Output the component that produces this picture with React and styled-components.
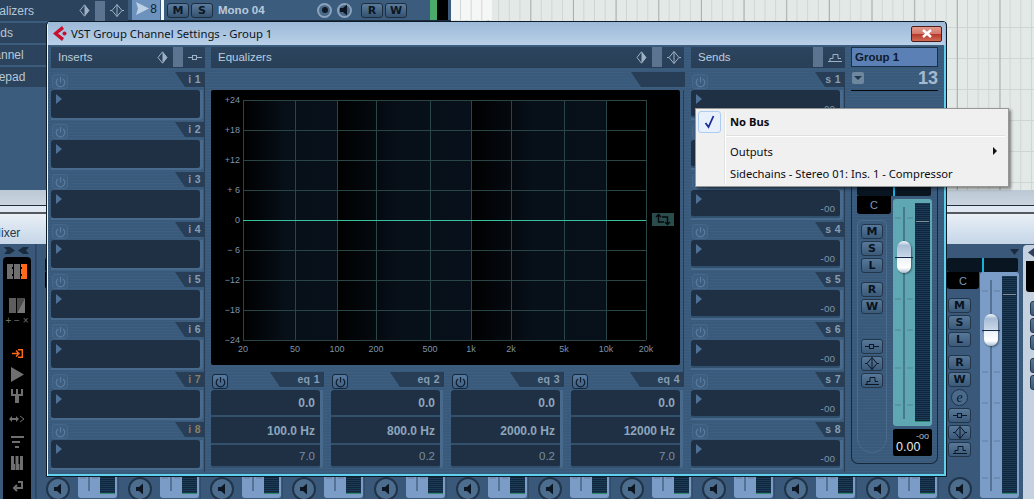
import styled, { createGlobalStyle } from 'styled-components';

const GlobalStyle = createGlobalStyle`
    html, body {
        margin: 0;
        padding: 0;
        background: #3b5a7a;
    }
    * {
        box-sizing: border-box;
    }
`;

const Page = styled.div`
    position: relative;
    display: flex;
    flex-direction: column;
    width: 1034px;
    height: 499px;
    overflow: hidden;
    font-family: "Liberation Sans", Arial, sans-serif;
`;

/* ---------- project window behind ---------- */

const Arrange = styled.div`
    display: flex;
    height: 190px;
    flex-shrink: 0;
`;

const Inspector = styled.div`
    width: 128px;
    background: #3c5c7e;
    display: flex;
    flex-direction: column;
    gap: 2px;
`;

const InspectorRow = styled.div`
    display: flex;
    align-items: center;
    height: 20px;
    padding-right: 4px;
    background: #2b435d;
    color: #b8c8d8;
    font-size: 12px;
    white-space: nowrap;
    overflow: hidden;

    &:first-child {
        height: 21px;
    }
`;

const ClippedName = styled.span`
    margin-left: ${(props) => props.$shift}px;
    margin-right: auto;
`;

const GreyBar = styled.span`
    width: 10px;
    height: 20px;
    margin: 0 ${(props) => props.$space ?? 5}px;
    background: #5c7490;
`;

const TrackList = styled.div`
    width: 323px;
    background: #3c5c7e;
`;

const TrackRow = styled.div`
    display: flex;
    align-items: center;
    height: 21px;
    border-bottom: 1px solid #1d2d3e;
`;

const TrackNumber = styled.div`
    display: flex;
    align-items: center;
    justify-content: space-between;
    width: 28px;
    height: 20px;
    margin-left: 4px;
    padding: 0 3px 3px 4px;
    background: #6d92bd;
    color: #10202f;
    font-size: 12px;
`;

const TrackGap = styled.div`
    width: 3px;
    height: 20px;
    margin: 0 1px;
    background: #f4f6f4;
`;

const TrackButton = styled.div`
    display: flex;
    align-items: center;
    justify-content: center;
    width: 22px;
    height: 15px;
    margin-left: 2px;
    border-radius: 3px;
    border: 1px solid #1c2d3f;
    background: linear-gradient(#5c7c9e, #35526f);
    color: #0b1723;
    font-family: "DejaVu Sans", sans-serif;
    font-size: 11px;
    font-weight: bold;
`;

const TrackName = styled.span`
    margin-left: 5px;
    margin-right: auto;
    color: #b9cadb;
    font-size: 11.5px;
    font-weight: bold;
`;

const RoundKnob = styled.span`
    display: flex;
    align-items: center;
    justify-content: center;
    width: 15px;
    height: 15px;
    margin-right: ${(props) => props.$space}px;
    border-radius: 50%;
    border: 2px solid #8aa2bb;
    background: #4a6888;
`;

const KnobDot = styled.span`
    width: 6px;
    height: 6px;
    border-radius: 50%;
    background: #0f1b28;
`;

const Level = styled.span`
    width: ${(props) => props.$width}px;
    height: 20px;
    background: ${(props) => props.$color};
`;

const GridArea = styled.div`
    flex: 1;
    background-color: #e3e9e7;
    background-image:
        linear-gradient(90deg, #a9b0ae 1px, transparent 1px),
        linear-gradient(90deg, #cfd5d3 1px, transparent 1px),
        linear-gradient(#cfd5d3 1px, transparent 1px);
    background-size: 42.67px 100%, 10.67px 100%, 100% 31px;
    background-position: 36.7px 0, 4.5px 0, 0 27px;
`;

const LightGrid = styled.div`
    width: 41px;
    height: 20px;
    background-color: #f5f7f6;
    background-image: linear-gradient(90deg, #cfd5d3 1px, transparent 1px);
    background-size: 10.67px 100%;
    background-position: 9px 0;
`;

const ArrangeFooter = styled.div`
    height: 16px;
    flex-shrink: 0;
    background: linear-gradient(#bcc8d5, #c9d4df);
    border-bottom: 1px solid #1e2e3e;
`;

const ArrangeScroll = styled.div`
    height: 8px;
    flex-shrink: 0;
    background: #dfe8f2;
    border-bottom: 2px solid #55585c;
`;

const MixerTitle = styled.div`
    display: flex;
    align-items: flex-end;
    height: 30px;
    flex-shrink: 0;
    padding-bottom: 4px;
    background: linear-gradient(#e9eff6, #c5d6e8);
    color: #24384c;
    font-size: 12px;
    overflow: hidden;
`;

/* ---------- mixer ---------- */

const Mixer = styled.div`
    display: flex;
    flex: 1;
    min-height: 0;
    background: #3a5879;
`;

const ToolColumn = styled.div`
    display: flex;
    flex-direction: column;
    width: 36px;
    flex-shrink: 0;
    padding: 3px 5px 0 3px;
    border-right: 1px solid #2c4661;
`;

const CollapseRow = styled.div`
    display: flex;
    justify-content: space-between;
    height: 10px;
    padding: 0 1px;
`;

const ToolBar = styled.div`
    display: flex;
    flex: 1;
    flex-direction: column;
    align-items: center;
    width: 28px;
    border-radius: 4px 4px 0 0;
    background: #000;
`;

const ToolIcon = styled.svg`
    display: block;
    flex-shrink: 0;
    margin-top: ${(props) => props.$top}px;
`;

const ToolSigns = styled.span`
    margin-top: 2px;
    color: #6f6f6f;
    font-size: 10px;
    line-height: 11px;
    white-space: nowrap;
`;

const Channel = styled.div`
    display: flex;
    flex-direction: column;
    width: 82px;
    flex-shrink: 0;
    padding: 3px 1px 0 8px;
    border-left: 1px solid #314d6a;
`;

const ChannelArrow = styled.div`
    display: flex;
    justify-content: flex-end;
    height: 11px;
    padding: 2px 0 0 0;
`;

const LevelBar = styled.div`
    display: flex;
    justify-content: center;
    width: ${(props) => props.$width}px;
    height: 14px;
    flex-shrink: 0;
    border-radius: 2px;
    background: #0a1522;
`;

const LevelTick = styled.span`
    width: 2px;
    height: 100%;
    background: #17b2dc;
`;

const ChannelBody = styled.div`
    display: flex;
    flex: 1;
    min-height: 0;
`;

const ButtonColumn = styled.div`
    display: flex;
    flex-direction: column;
    width: 33px;
    flex-shrink: 0;
`;

const PanBox = styled.div`
    display: flex;
    align-items: center;
    justify-content: center;
    width: ${(props) => props.$width}px;
    height: ${(props) => props.$height}px;
    flex-shrink: 0;
    border-radius: 0 0 3px 3px;
    background: #000;
    color: #7d9ab8;
    font-size: 11px;
`;

const StripButton = styled.div`
    display: flex;
    align-items: center;
    justify-content: center;
    width: 23px;
    height: 15px;
    flex-shrink: 0;
    margin-top: ${(props) => props.$top ?? 2}px;
    margin-left: 1px;
    border-radius: 3px;
    border: 1px solid #223549;
    background: linear-gradient(#587899, #3b5a7a);
    color: #08131e;
    font-family: "DejaVu Sans", sans-serif;
    font-size: 11px;
    font-weight: bold;
`;

const EditButton = styled.div`
    display: flex;
    align-items: center;
    justify-content: center;
    width: 17px;
    height: 17px;
    flex-shrink: 0;
    margin: 2px 0 0 4px;
    border-radius: 50%;
    border: 1px solid #1f3146;
    background: #4a6a8b;
    color: #0b1723;
    font-family: "Liberation Serif", serif;
    font-size: 14px;
    font-style: italic;
`;

const SpeakerButton = styled.div`
    display: flex;
    align-items: center;
    justify-content: center;
    width: 24px;
    height: 24px;
    flex-shrink: 0;
    margin-top: auto;
    margin-bottom: -2px;
    margin-left: 1px;
    border-radius: 50%;
    border: 2px solid #20344a;
    background: #4d6d8e;
`;

const FaderPanel = styled.div`
    position: relative;
    display: flex;
    justify-content: flex-end;
    width: 39px;
    height: ${(props) => props.$height}px;
    flex-shrink: 0;
    padding: 4px 2px 4px 0;
    border-radius: 3px;
    background: ${(props) => props.$color};
`;

const FaderScale = styled.svg`
    position: absolute;
    left: 0;
    top: 0;
`;

const FaderHandle = styled.div`
    position: absolute;
    left: 4px;
    top: 42px;
    width: 14px;
    height: 32px;
    border-radius: 7px;
    background: linear-gradient(#f4f7fb 0, #a8bdd6 14%, #c5d4e5 46%, #eef3f8 56%, #fff 84%, #a9bcd2 100%);
    box-shadow: 1px 1px 2px rgba(0, 0, 0, 0.45);

    &::after {
        content: '';
        position: absolute;
        left: -2px;
        right: -2px;
        top: 16px;
        height: 1px;
        background: #112a4a;
    }
`;

const Meter = styled.div`
    position: relative;
    width: 15px;
    height: 100%;
    background: repeating-linear-gradient(#1a3a55 0, #1a3a55 1px, #10263c 1px, #10263c 2px);
    border-bottom: 1px solid #2f8a6a;

    &::after {
        content: '';
        position: absolute;
        left: 1px;
        right: 1px;
        top: 18px;
        height: 1px;
        background: #7f8f9c;
    }
`;

const SideChannel = styled.div`
    display: flex;
    flex-direction: column;
    flex: 1;
    margin: 1px 0 0 3px;
    padding: 3px 0 0 3px;
    border-radius: 4px 0 0 0;
    background: #c3d1e0;
`;

const SideArrow = styled.svg`
    display: block;
    flex-shrink: 0;
    margin: 0 0 4px 2px;
`;

const SideButton = styled(StripButton)`
    margin-left: 4px;
`;

/* ---------- channel settings window ---------- */

const SettingsWindow = styled.div`
    position: absolute;
    left: 46px;
    top: 21px;
    display: flex;
    flex-direction: column;
    width: 901px;
    height: 456px;
    border: 1px solid #0d1a27;
    border-radius: 4px 4px 0 0;
    background: #3c5c7d;
    box-shadow: inset 1px 0 0 #eef6fb, inset -2px -2px 0 #5fd0ee;
`;

const TitleBar = styled.div`
    display: flex;
    align-items: center;
    height: 23px;
    flex-shrink: 0;
    margin: 0 1px;
    padding: 0 3px 0 5px;
    background: linear-gradient(#9cb9d8, #b9d0e8);
`;

const WindowTitle = styled.span`
    margin-left: 3px;
    margin-right: auto;
    color: #0d1520;
    font-family: "Noto Sans", sans-serif;
    font-size: 11.35px;
`;

const CloseButton = styled.div`
    display: flex;
    align-items: center;
    justify-content: center;
    width: 31px;
    height: 16px;
    border: 1px solid #4c1c18;
    border-radius: 2px;
    background: linear-gradient(#e29a8c 0, #d5766a 48%, #b5392b 52%, #cf6a55 100%);
`;

const WindowBody = styled.div`
    display: flex;
    flex: 1;
    min-height: 0;
    margin: 0 2px 2px 1px;
    padding: 2px 0 0 3px;
    background: repeating-linear-gradient(#3e5e7f 0, #3e5e7f 1px, #3a5a7b 1px, #3a5a7b 3px);
`;

const RackColumn = styled.div`
    display: flex;
    flex-direction: column;
    width: 154px;
    margin-right: ${(props) => props.$space}px;
`;

const EqColumn = styled.div`
    display: flex;
    flex-direction: column;
    width: 473px;
    margin-right: 7px;
`;

const PanelHeader = styled.div`
    display: flex;
    align-items: center;
    height: 21px;
    flex-shrink: 0;
    margin-bottom: 4px;
    padding: 0 3px 1px 7px;
    background: linear-gradient(#2c445e, #283f57);
    color: #bccddd;
    font-size: 11.5px;
`;

const HeaderName = styled.span`
    margin-right: auto;
`;

const SlotList = styled.div`
    display: flex;
    flex-direction: column;
    border-right: 1px solid #263d55;
`;

const Slot = styled.div`
    display: flex;
    flex-direction: column;
    height: 50px;
`;

const SlotHead = styled.div`
    display: flex;
    justify-content: space-between;
    height: 18px;
    flex-shrink: 0;
`;

const PowerButton = styled.div`
    display: flex;
    align-items: center;
    justify-content: center;
    width: 16px;
    height: 15px;
    margin: 2px 0 0 1px;
    border-radius: 3px;
    border: 1px solid ${(props) => (props.$active ? '#15283c' : '#46668a')};
    background: ${(props) => (props.$active ? 'linear-gradient(#587a9e, #3f5f82)' : '#3e5e80')};
`;

const SlotTag = styled.div`
    display: flex;
    align-items: center;
    justify-content: flex-end;
    width: ${(props) => props.$width}px;
    height: 15px;
    padding: 0 4px 1px 0;
    margin-right: -1px;
    clip-path: polygon(0 0, 100% 0, 100% 100%, 10px 100%);
    background: #273e56;
    color: ${(props) => (props.$muted ? '#8c7f5f' : '#869db4')};
    font-size: 10.5px;
    font-weight: bold;
    letter-spacing: 0.4px;
`;

const SlotFrame = styled.div`
    width: 152px;
    height: 30px;
    border-right: 3px solid #486a8c;
    border-bottom: 2px solid #486a8c;
    border-radius: 0 0 4px 0;
`;

const SlotBox = styled.div`
    display: flex;
    justify-content: space-between;
    height: 28px;
    padding: 4px 5px 0 5px;
    border-radius: 3px;
    background: #1f3044;
    border-bottom: ${(props) => (props.$send ? '2px solid #31506e' : 'none')};
`;

const SlotArrow = styled.span`
    width: 0;
    height: 0;
    border-top: 5px solid transparent;
    border-bottom: 5px solid transparent;
    border-left: 6px solid #4d7096;
`;

const SendLevel = styled.span`
    align-self: flex-end;
    margin-bottom: 2px;
    color: #7a90a6;
    font-size: 10px;
`;

const GraphHead = styled.div`
    display: flex;
    justify-content: flex-end;
    height: 18px;
    flex-shrink: 0;
`;

const GraphArea = styled.div`
    height: 282px;
    flex-shrink: 0;
    border-right: 1px solid #263d55;
    padding-right: 3px;
`;

const Graph = styled.svg`
    display: block;
    background: #000;
    border-radius: 2px;
`;

const EqRow = styled.div`
    display: flex;
    gap: 8px;
`;

const EqModule = styled.div`
    display: flex;
    flex-direction: column;
    width: 112px;
    height: 98px;
`;

const EqFrame = styled.div`
    width: 112px;
    border-right: 3px solid #486a8c;
    border-radius: 0 0 3px 0;
`;

const EqBox = styled.div`
    display: flex;
    flex-direction: column;
    height: 78px;
    border-radius: 3px;
    background: #1f3044;
    border-bottom: 2px solid #31506e;
`;

const EqValue = styled.div`
    display: flex;
    align-items: center;
    justify-content: flex-end;
    height: ${(props) => props.$height}px;
    padding: 1px 5px 0 0;
    border-bottom: ${(props) => (props.$last ? 'none' : '2px solid #33506c')};
    color: #8ea5bb;
    font-size: ${(props) => (props.$last ? 11.5 : 12)}px;
    font-weight: ${(props) => (props.$last ? 'normal' : 'bold')};
    opacity: ${(props) => (props.$last ? 0.8 : 1)};
`;

const StripColumn = styled.div`
    display: flex;
    flex-direction: column;
    width: 87px;
`;

const GroupName = styled.div`
    display: flex;
    align-items: center;
    height: 20px;
    flex-shrink: 0;
    padding-left: 3px;
    border: 1px solid #1b2f45;
    background: #5a80b6;
    color: #0f1b29;
    font-size: 11.5px;
    font-weight: bold;
`;

const StripNumberRow = styled.div`
    display: flex;
    align-items: center;
    justify-content: space-between;
    height: 24px;
    flex-shrink: 0;
    padding: 0 0 0 1px;
    border-bottom: 1px solid #05090e;
    color: #a5bace;
    font-size: 18px;
    font-weight: bold;
`;

const DropButton = styled.div`
    display: flex;
    align-items: center;
    justify-content: center;
    width: 12px;
    height: 12px;
    margin-bottom: 2px;
    border-radius: 2px;
    background: #6d879f;
`;

const DropArrow = styled.span`
    width: 0;
    height: 0;
    border-left: 4px solid transparent;
    border-right: 4px solid transparent;
    border-top: 4px solid #22384e;
`;

const StripFrame = styled.div`
    display: flex;
    flex-direction: column;
    height: 282px;
    margin-top: 91px;
    padding-left: 5px;
    border-left: 1px solid #16283a;
    border-right: 1px solid #16283a;
    border-bottom: 1px solid #16283a;
    border-radius: 0 0 7px 7px;
`;

const StripRow = styled.div`
    display: flex;
    flex: 1;
    min-height: 0;
`;

const StripLeft = styled.div`
    display: flex;
    flex-direction: column;
    width: 36px;
    flex-shrink: 0;
`;

const ButtonWell = styled.div`
    display: flex;
    flex-direction: column;
    align-items: center;
    width: 30px;
    height: 233px;
    margin-top: 6px;
    padding-top: 3px;
    border: 1px solid #4a6b8c;
    border-radius: 5px 5px 15px 15px;

    ${StripButton} {
        margin-left: 0;
        width: 22px;
    }
`;

const StripRight = styled.div`
    display: flex;
    flex-direction: column;
    padding-top: 3px;
`;

const ValueBox = styled.div`
    display: flex;
    flex-direction: column;
    width: 39px;
    height: 27px;
    margin-top: 3px;
    padding: 3px 3px 0 3px;
    border-radius: 2px;
    background: #000;
    color: #e2eaf2;
    font-size: 12.5px;
    line-height: 12px;
`;

const ValueMin = styled.span`
    align-self: flex-end;
    color: #a9bbcc;
    font-size: 9px;
    line-height: 9px;
`;

/* ---------- context menu ---------- */

const BusMenu = styled.div`
    position: absolute;
    left: 695px;
    top: 108px;
    width: 314px;
    height: 79px;
    padding: 1px 1px;
    border: 1px solid #979797;
    background: #f0f0f0;
    box-shadow: 2px 2px 3px rgba(0, 0, 0, 0.45);
    color: #0b0b14;
    font-family: "Noto Sans", sans-serif;
    font-size: 11.2px;
`;

const MenuGutter = styled.span`
    position: absolute;
    left: 28px;
    top: 2px;
    bottom: 2px;
    width: 1px;
    background: #e2e3e3;
    box-shadow: 1px 0 0 #fff;
`;

const MenuItem = styled.div`
    display: flex;
    align-items: center;
    height: 22px;
    padding: 0 10px 0 33px;
    font-weight: ${(props) => (props.$checked ? 'bold' : 'normal')};
`;

const MenuCheck = styled.span`
    position: absolute;
    left: 2px;
    top: 2px;
    display: flex;
    align-items: center;
    justify-content: center;
    width: 23px;
    height: 22px;
    border: 1px solid #aeccf0;
    border-radius: 3px;
    background: #e8f0fb;
`;

const MenuDivider = styled.div`
    height: 2px;
    margin: 3px 2px 3px 29px;
    background: #e0e0e0;
    border-bottom: 1px solid #fff;
`;

const MenuLabel = styled.span`
    margin-right: auto;
`;

const SubArrow = styled.span`
    width: 0;
    height: 0;
    border-top: 4px solid transparent;
    border-bottom: 4px solid transparent;
    border-left: 4px solid #111;
`;

/* ---------- icons ---------- */

function PowerIcon({ color }) {
    return (
        <svg width="11" height="12" viewBox="0 0 11 12" fill="none" stroke={color} strokeWidth="1.2">
            <path d="M3 3 A4.3 4.3 0 1 0 8 3" />
            <path d="M5.5 1 V6.5" />
        </svg>
    );
}

function DiamondIcon() {
    return (
        <svg width="11" height="13" viewBox="0 0 11 13">
            <path d="M5.5 .8 L10 6.5 L5.5 12.2 L1 6.5 Z" fill="none" stroke="#9fb2c5" />
            <path d="M5.5 .8 L10 6.5 L5.5 12.2 Z" fill="#9fb2c5" />
        </svg>
    );
}

function InsertIcon({ color = '#9fb2c5' }) {
    return (
        <svg width="14" height="9" viewBox="0 0 14 9" fill="none" stroke={color}>
            <path d="M0 4.5 H4 M9 4.5 H14" />
            <rect x="4.5" y="2.5" width="4" height="4" />
        </svg>
    );
}

function EqIcon({ color = '#9fb2c5' }) {
    return (
        <svg width="14" height="13" viewBox="0 0 14 13" fill="none" stroke={color}>
            <path d="M7 .5 L12 6.5 L7 12.5 L2 6.5 Z" />
            <path d="M7 .5 V12.5 M0 6.5 H2 M12 6.5 H14" />
        </svg>
    );
}

function SendIcon({ color = '#9fb2c5' }) {
    return (
        <svg width="14" height="9" viewBox="0 0 14 9" fill="none" stroke={color}>
            <path d="M0 8.5 H14 M2 8.5 V5.5 H5 V1.5 H10 V5.5 H13" />
        </svg>
    );
}

function SpeakerIcon() {
    return (
        <svg width="9" height="12" viewBox="0 0 9 12">
            <path d="M0 4 H3 L7 .5 V11.5 L3 8 H0 Z" fill="#0c1723" />
        </svg>
    );
}

function FaderTrack({ height }) {
    const marks = [19, 60, 100, 131, 169, 206];
    return (
        <FaderScale width="24" height={height}>
            <path d={`M11 8 V${height - 7}`} stroke="#2e4a62" fill="none" />
            {marks.map((y) => (
                <path key={y} d={`M2 ${y} H8 M14 ${y} H20`} stroke="#00000030" fill="none" />
            ))}
        </FaderScale>
    );
}

function Fader({ color, height }) {
    return (
        <FaderPanel $color={color} $height={height}>
            <FaderTrack height={height} />
            <FaderHandle />
            <Meter />
        </FaderPanel>
    );
}

function CollapseArrows() {
    return (
        <CollapseRow>
            <svg width="11" height="7" viewBox="0 0 11 7"><path d="M0 0 H6 L11 3.5 L6 7 H0 L3 3.5 Z" fill="#1a2b3d" /></svg>
            <svg width="11" height="7" viewBox="0 0 11 7"><path d="M11 0 H5 L0 3.5 L5 7 H11 L8 3.5 Z" fill="#1a2b3d" /></svg>
        </CollapseRow>
    );
}

function MixerTools() {
    return (
        <ToolColumn>
            <CollapseArrows />
            <ToolBar>
                <ToolIcon $top={7} width="20" height="15" viewBox="0 0 20 15">
                    <path d="M0 0 H6 V3 H5 V5 H6 V10 H5 V12 H6 V15 H0 Z" fill="#6f6f6f" />
                    <rect x="7" y="0" width="6" height="15" fill="#6f6f6f" />
                    <path d="M14 0 H20 V15 H14 V12 H15 V10 H14 V5 H15 V3 H14 Z" fill="#ff6a1a" />
                </ToolIcon>
                <ToolIcon $top={19} width="16" height="15" viewBox="0 0 16 15">
                    <rect width="7" height="15" fill="#5e5e5e" />
                    <path d="M8 15 V0 H16 L8 15 Z" fill="#4c4c4c" />
                    <path d="M16 0 V15 H8 Z" fill="#777" />
                </ToolIcon>
                <ToolSigns>+ − ×</ToolSigns>
                <ToolIcon $top={23} width="11" height="9" viewBox="0 0 11 9" fill="none" stroke="#ff6a1a" strokeWidth="1.4">
                    <path d="M0 4.5 H6 M4 1.5 L7 4.5 L4 7.5 M6 .7 H10.3 V8.3 H6" />
                </ToolIcon>
                <ToolIcon $top={9} width="13" height="15" viewBox="0 0 13 15">
                    <path d="M0 0 L13 7.5 L0 15 Z" fill="#6f6f6f" />
                </ToolIcon>
                <ToolIcon $top={7} width="12" height="14" viewBox="0 0 12 14">
                    <path d="M0 0 H2 V5 H5 V0 H7 V5 H10 V0 H12 V7 H8 V14 H4 V7 H0 Z" fill="#6f6f6f" />
                </ToolIcon>
                <ToolIcon $top={12} width="16" height="8" viewBox="0 0 16 8">
                    <path d="M0 4 L3 1 V3 H7 V1 L10 4 L7 7 V5 H3 V7 Z" fill="#6f6f6f" />
                    <path d="M11 1 L15 4 L11 7" fill="none" stroke="#6f6f6f" />
                </ToolIcon>
                <ToolIcon $top={13} width="13" height="12" viewBox="0 0 13 12">
                    <path d="M0 0 H13 V2 H0 Z M1 5 H9 V7 H1 Z M4 10 H8 V12 H4 Z" fill="#6f6f6f" />
                </ToolIcon>
                <ToolIcon $top={8} width="12" height="14" viewBox="0 0 12 14">
                    <path d="M0 0 H3 V8 H4 V14 H0 Z M4.5 0 H7.5 V8 H8 V14 H4.5 Z M9 0 H12 V14 H8.5 V8 H9 Z" fill="#6f6f6f" />
                </ToolIcon>
                <ToolIcon $top={11} width="11" height="11" viewBox="0 0 11 11" fill="none" stroke="#6f6f6f" strokeWidth="2">
                    <path d="M6 1 H10 V7 H2 M5 4 L2 7 L5 10" />
                </ToolIcon>
            </ToolBar>
        </ToolColumn>
    );
}

function MixerChannel() {
    return (
        <Channel>
            <ChannelArrow>
                <svg width="9" height="6" viewBox="0 0 9 6"><path d="M0 0 H9 L4.5 6 Z" fill="#1a2b3d" /></svg>
            </ChannelArrow>
            <LevelBar $width={71}><LevelTick /></LevelBar>
            <ChannelBody>
                <ButtonColumn>
                    <PanBox $width={32} $height={17}>C</PanBox>
                    <StripButton $top={9}>M</StripButton>
                    <StripButton>S</StripButton>
                    <StripButton>L</StripButton>
                    <StripButton $top={8}>R</StripButton>
                    <StripButton>W</StripButton>
                    <EditButton>e</EditButton>
                    <StripButton><InsertIcon color="#0c1723" /></StripButton>
                    <StripButton><EqIcon color="#0c1723" /></StripButton>
                    <StripButton><SendIcon color="#0c1723" /></StripButton>
                    <SpeakerButton><SpeakerIcon /></SpeakerButton>
                </ButtonColumn>
                <Fader color="#7a9cc6" height={226} />
            </ChannelBody>
        </Channel>
    );
}

function RackSlot({ label, muted, send }) {
    return (
        <Slot>
            <SlotHead>
                <PowerButton><PowerIcon color="#5c7c9e" /></PowerButton>
                <SlotTag $width={30} $muted={muted}>{label}</SlotTag>
            </SlotHead>
            <SlotFrame>
                <SlotBox $send={send}>
                    <SlotArrow />
                    {send && <SendLevel>-oo</SendLevel>}
                </SlotBox>
            </SlotFrame>
        </Slot>
    );
}

function EqBand({ band }) {
    return (
        <EqModule>
            <SlotHead>
                <PowerButton $active><PowerIcon color="#0e1d2d" /></PowerButton>
                <SlotTag $width={54}>{band.label}</SlotTag>
            </SlotHead>
            <EqFrame>
                <EqBox>
                    <EqValue $height={27}>{band.gain}</EqValue>
                    <EqValue $height={28}>{band.freq}</EqValue>
                    <EqValue $height={21} $last>{band.q}</EqValue>
                </EqBox>
            </EqFrame>
        </EqModule>
    );
}

const gridX = [
    [32, '20'], [84, '50'], [126, '100'], [165, '200'], [219, '500'],
    [260, '1k'], [300, '2k'], [353, '5k'], [395, '10k'], [435, '20k'],
];

const gridY = [
    [10, '+24'], [40, '+18'], [70, '+12'], [100, '+ 6'], [130, '0'],
    [160, '− 6'], [190, '−12'], [220, '−18'], [250, '−24'],
];

function EqGraph() {
    return (
        <Graph width="469" height="275" viewBox="0 0 469 275">
            <defs>
                <linearGradient id="decade">
                    <stop offset="0" stopColor="#000" />
                    <stop offset="0.45" stopColor="#070f18" />
                    <stop offset="1" stopColor="#08111b" />
                </linearGradient>
            </defs>
            <rect x="32" y="10" width="94" height="240" fill="url(#decade)" />
            <rect x="126" y="10" width="134" height="240" fill="url(#decade)" />
            <rect x="260" y="10" width="135" height="240" fill="url(#decade)" />
            {gridX.map(([x, label]) => (
                <g key={label}>
                    <path d={`M${x + 0.5} 10 V250`} stroke="#2a4546" fill="none" />
                    <text x={x} y="262" textAnchor="middle" fill="#7e93a8" fontSize="9" fontFamily="Liberation Sans">{label}</text>
                </g>
            ))}
            {gridY.map(([y, label]) => (
                <g key={label}>
                    <path d={`M32 ${y + 0.5} H435`} stroke={label === '0' ? '#35c29c' : '#2a4546'} fill="none" />
                    <text x="29" y={y + 3} textAnchor="end" fill="#7e93a8" fontSize="9" fontFamily="Liberation Sans">{label}</text>
                </g>
            ))}
            <rect x="441" y="123" width="22" height="13" fill="#2a4c4c" />
            <path d="M445 127 L447.5 124.5 L450 127 M447.5 125 V132 H453 M459 132 L456.5 134.5 L454 132 M456.5 134 V127 H451" fill="none" stroke="#02090a" strokeWidth="1.4" />
        </Graph>
    );
}

const eqBands = [
    { label: 'eq 1', gain: '0.0', freq: '100.0 Hz', q: '7.0' },
    { label: 'eq 2', gain: '0.0', freq: '800.0 Hz', q: '0.2' },
    { label: 'eq 3', gain: '0.0', freq: '2000.0 Hz', q: '0.2' },
    { label: 'eq 4', gain: '0.0', freq: '12000 Hz', q: '7.0' },
];

const inserts = [1, 2, 3, 4, 5, 6, 7, 8];

export default function App() {
    return (
        <Page>
            <GlobalStyle />
            <Arrange>
                <Inspector>
                    <InspectorRow>
                        <ClippedName $shift={-22}>Equalizers</ClippedName>
                        <DiamondIcon />
                        <GreyBar />
                        <EqIcon />
                    </InspectorRow>
                    <InspectorRow><ClippedName $shift={-21}>Sends</ClippedName></InspectorRow>
                    <InspectorRow><ClippedName $shift={-21}>Channel</ClippedName></InspectorRow>
                    <InspectorRow><ClippedName $shift={-20}>Notepad</ClippedName></InspectorRow>
                </Inspector>
                <TrackList>
                    <TrackRow>
                        <TrackNumber>
                            <svg width="13" height="13" viewBox="0 0 13 13"><path d="M0 0 L13 6.5 L0 13 L2 6.5 Z" fill="#bcd0e6" /></svg>
                            8
                        </TrackNumber>
                        <TrackGap />
                        <TrackButton>M</TrackButton>
                        <TrackButton>S</TrackButton>
                        <TrackName>Mono 04</TrackName>
                        <RoundKnob $space={5}><KnobDot /></RoundKnob>
                        <RoundKnob $space={7}><SpeakerIcon /></RoundKnob>
                        <TrackButton>R</TrackButton>
                        <TrackButton>W</TrackButton>
                        <Level $width={23} />
                        <Level $width={7} $color="#4aab6b" />
                        <Level $width={11} $color="#000" />
                        <Level $width={3} />
                    </TrackRow>
                </TrackList>
                <GridArea><LightGrid /></GridArea>
            </Arrange>
            <ArrangeFooter />
            <ArrangeScroll />
            <MixerTitle><ClippedName $shift={-9}>Mixer</ClippedName></MixerTitle>
            <Mixer>
                <MixerTools />
                {Array.from({ length: 12 }, (_, index) => (
                    <MixerChannel key={index} />
                ))}
                <SideChannel>
                    <SideArrow width="6" height="9" viewBox="0 0 6 9"><path d="M6 0 V9 L0 4.5 Z" fill="#2a4059" /></SideArrow>
                    <PanBox $width={32} $height={31}>C</PanBox>
                    <SideButton $top={9}>M</SideButton>
                    <SideButton>S</SideButton>
                    <SideButton>L</SideButton>
                    <SideButton $top={8}>R</SideButton>
                    <SideButton>W</SideButton>
                </SideChannel>
            </Mixer>

            <SettingsWindow>
                <TitleBar>
                    <svg width="15" height="15" viewBox="0 0 15 15">
                        <path d="M9 0 L0 7.5 L9 15 L11 12 L5 7.5 L11 3 Z" fill="#c8102e" />
                        <circle cx="11.5" cy="7.5" r="2" fill="#c8102e" />
                    </svg>
                    <WindowTitle>VST Group Channel Settings - Group 1</WindowTitle>
                    <CloseButton>
                        <svg width="12" height="9" viewBox="0 0 12 9">
                            <path d="M2 1 L10 8 M10 1 L2 8" stroke="#fff" strokeWidth="2.4" fill="none" />
                        </svg>
                    </CloseButton>
                </TitleBar>
                <WindowBody>
                    <RackColumn $space={6}>
                        <PanelHeader>
                            <HeaderName>Inserts</HeaderName>
                            <DiamondIcon />
                            <GreyBar />
                            <InsertIcon />
                        </PanelHeader>
                        <SlotList>
                            {inserts.map((n) => (
                                <RackSlot key={n} label={`i ${n}`} muted={n > 6} />
                            ))}
                        </SlotList>
                    </RackColumn>

                    <EqColumn>
                        <PanelHeader>
                            <HeaderName>Equalizers</HeaderName>
                            <DiamondIcon />
                            <GreyBar />
                            <EqIcon />
                        </PanelHeader>
                        <GraphHead><SlotTag $width={54} /></GraphHead>
                        <GraphArea><EqGraph /></GraphArea>
                        <EqRow>
                            {eqBands.map((band) => (
                                <EqBand key={band.label} band={band} />
                            ))}
                        </EqRow>
                    </EqColumn>

                    <RackColumn $space={6}>
                        <PanelHeader>
                            <HeaderName>Sends</HeaderName>
                            <GreyBar />
                            <SendIcon />
                        </PanelHeader>
                        <SlotList>
                            {inserts.map((n) => (
                                <RackSlot key={n} label={`s ${n}`} send />
                            ))}
                        </SlotList>
                    </RackColumn>

                    <StripColumn>
                        <GroupName>Group 1</GroupName>
                        <StripNumberRow>
                            <DropButton><DropArrow /></DropButton>
                            13
                        </StripNumberRow>
                        <StripFrame>
                            <LevelBar $width={74}><LevelTick /></LevelBar>
                            <StripRow>
                                <StripLeft>
                                    <PanBox $width={34} $height={18}>C</PanBox>
                                    <ButtonWell>
                                        <StripButton $top={0}>M</StripButton>
                                        <StripButton>S</StripButton>
                                        <StripButton>L</StripButton>
                                        <StripButton $top={9}>R</StripButton>
                                        <StripButton>W</StripButton>
                                        <StripButton $top={25}><InsertIcon color="#0c1723" /></StripButton>
                                        <StripButton><EqIcon color="#0c1723" /></StripButton>
                                        <StripButton><SendIcon color="#0c1723" /></StripButton>
                                    </ButtonWell>
                                </StripLeft>
                                <StripRight>
                                    <Fader color="#5fa7b3" height={227} />
                                    <ValueBox>
                                        <ValueMin>-oo</ValueMin>
                                        0.00
                                    </ValueBox>
                                </StripRight>
                            </StripRow>
                        </StripFrame>
                    </StripColumn>
                </WindowBody>
            </SettingsWindow>

            <BusMenu>
                <MenuGutter />
                <MenuCheck>
                    <svg width="11" height="14" viewBox="0 0 11 14">
                        <path d="M1.5 8 L4.5 12 L9.5 1" fill="none" stroke="#1c2a9c" strokeWidth="1.8" />
                    </svg>
                </MenuCheck>
                <MenuItem $checked>No Bus</MenuItem>
                <MenuDivider />
                <MenuItem>
                    <MenuLabel>Outputs</MenuLabel>
                    <SubArrow />
                </MenuItem>
                <MenuItem>Sidechains - Stereo 01: Ins. 1 - Compressor</MenuItem>
            </BusMenu>
        </Page>
    );
}
